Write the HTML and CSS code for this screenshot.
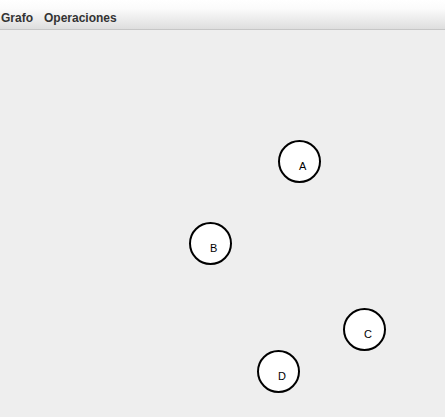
FILE: index.html
```html
<!DOCTYPE html>
<html>
<head>
<meta charset="utf-8">
<link rel="stylesheet" href="styles.css">
</head>
<body>
<div class="menubar">
  <span class="menu menu-grafo">Grafo</span>
  <span class="menu">Operaciones</span>
</div>
<div class="canvas">
  <div class="node" style="left:278px;top:109px"><span class="label">A</span></div>
  <div class="node" style="left:189px;top:191px"><span class="label">B</span></div>
  <div class="node" style="left:343px;top:277px"><span class="label">C</span></div>
  <div class="node" style="left:257px;top:319px"><span class="label">D</span></div>
</div>
</body>
</html>
```
FILE: styles.css
```css
html, body {
  margin: 0;
  padding: 0;
  width: 445px;
  height: 417px;
  overflow: hidden;
  background: #eeeeee;
}
.menubar {
  height: 30px;
  box-sizing: border-box;
  border-bottom: 1px solid #c6c6c6;
  background: linear-gradient(to bottom, #ffffff 0%, #fbfbfb 30%, #dedede 100%);
  display: flex;
  align-items: flex-start;
  padding-left: 1px;
  gap: 11px;
  font-family: "Liberation Sans", Arial, sans-serif;
  font-weight: bold;
  font-size: 12px;
  color: #333333;
}
.menu {
  line-height: 14px;
  padding-top: 11px;
}
.canvas {
  position: relative;
  height: 387px;
  margin-top: 1px;
}
.node {
  position: absolute;
  width: 43px;
  height: 43px;
  box-sizing: border-box;
  border: 2px solid #000;
  border-radius: 50%;
  background: #ffffff;
}
.label {
  position: absolute;
  left: 19px;
  top: 19px;
  font-family: "Liberation Sans", Arial, sans-serif;
  font-size: 11px;
  line-height: 11px;
  color: #000;
}
```
